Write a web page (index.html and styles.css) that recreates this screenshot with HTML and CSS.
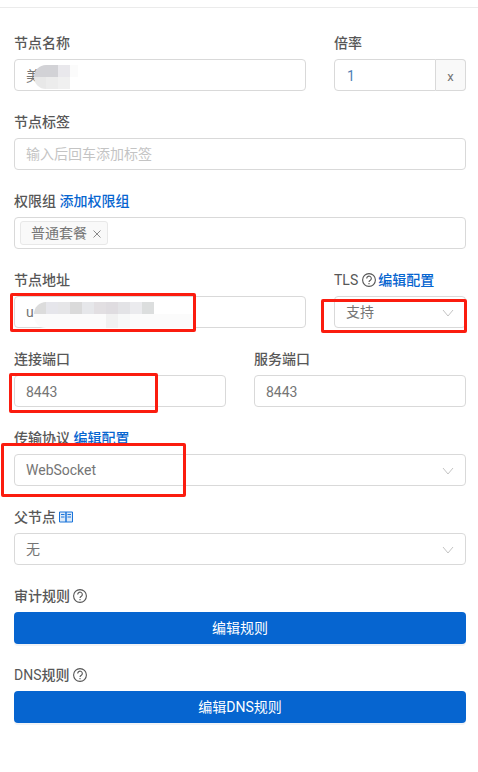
FILE: index.html
```html
<!DOCTYPE html>
<html lang="en">
<head>
    <meta charset="UTF-8">
    <meta name="viewport" content="width=device-width, initial-scale=1.0">
    <title>节点设置</title>
    <link rel="stylesheet" href="styles.css">
</head>
<body>

<div class="top-line"></div>

<form class="node-form">
    <div class="row">
        <div class="field col-wide">
            <label class="field-label">节点名称</label>
            <div class="input-wrap">
                <input class="input" type="text" value="美">
                <div class="mosaic mosaic-name"></div>
            </div>
        </div>
        <div class="field col-narrow">
            <label class="field-label">倍率</label>
            <div class="input-group">
                <input class="input input-rate" type="text" value="1">
                <span class="addon">x</span>
            </div>
        </div>
    </div>

    <div class="field">
        <label class="field-label">节点标签</label>
        <input class="input" type="text" placeholder="输入后回车添加标签">
    </div>

    <div class="field">
        <label class="field-label">权限组 <a class="link" href="#">添加权限组</a></label>
        <div class="tags-input">
            <span class="tag">普通套餐<svg class="tag-close" viewBox="0 0 8 8"><path d="M.5.5l7 7M7.500.5l-7 7"/></svg></span>
        </div>
    </div>

    <div class="row">
        <div class="field col-wide">
            <label class="field-label">节点地址</label>
            <div class="input-wrap">
                <input class="input" type="text" value="u">
                <div class="mosaic mosaic-addr"></div>
            </div>
        </div>
        <div class="field col-narrow">
            <label class="field-label label-thin">TLS <svg class="help" viewBox="0 0 14 14"><circle cx="7" cy="7" r="6.4"/><path d="M4.700 5.400a2.300 2.300 0 1 1 3.600 1.900c-.8.500-1.300.9-1.300 1.800"/><path d="M7 10.100v1.100"/></svg> <a class="link" href="#">编辑配置</a></label>
            <div class="select">支持<svg class="chevron" viewBox="0 0 12 8"><path d="M1 1l5 6 5-6"/></svg></div>
        </div>
    </div>

    <div class="row">
        <div class="field col-half">
            <label class="field-label">连接端口</label>
            <input class="input input-num" type="text" value="8443">
        </div>
        <div class="field col-half">
            <label class="field-label">服务端口</label>
            <input class="input input-num" type="text" value="8443">
        </div>
    </div>

    <div class="field">
        <label class="field-label">传输协议 <a class="link" href="#">编辑配置</a></label>
        <div class="select">WebSocket<svg class="chevron" viewBox="0 0 12 8"><path d="M1 1l5 6 5-6"/></svg></div>
    </div>

    <div class="field">
        <label class="field-label">父节点 <svg class="book" viewBox="0 0 14 12"><path class="book-fill" d="M.5 1h6.500v10H.5zM7 1h6.500v10H7z"/><path d="M2 3.500h3.500M2 6h3.500M8.500 3.500H12M8.500 6H12"/></svg></label>
        <div class="select">无<svg class="chevron" viewBox="0 0 12 8"><path d="M1 1l5 6 5-6"/></svg></div>
    </div>

    <div class="field">
        <label class="field-label">审计规则 <svg class="help" viewBox="0 0 14 14"><circle cx="7" cy="7" r="6.4"/><path d="M4.700 5.400a2.300 2.300 0 1 1 3.600 1.900c-.8.500-1.300.9-1.300 1.800"/><path d="M7 10.100v1.100"/></svg></label>
        <button class="btn" type="button">编辑规则</button>
    </div>

    <div class="field">
        <label class="field-label"><span class="latin">DNS</span>规则 <svg class="help" viewBox="0 0 14 14"><circle cx="7" cy="7" r="6.4"/><path d="M4.700 5.400a2.300 2.300 0 1 1 3.600 1.900c-.8.500-1.300.9-1.300 1.800"/><path d="M7 10.100v1.100"/></svg></label>
        <button class="btn" type="button">编辑DNS规则</button>
    </div>
</form>

<!-- red boxes drawn on top of the screenshot -->
<div class="mark mark-addr"></div>
<div class="mark mark-tls"></div>
<div class="mark mark-port"></div>
<div class="mark mark-proto"></div>

</body>
</html>
```

FILE: styles.css
```css
* {
    box-sizing: border-box;
}
body {
    margin: 0;
    height: 772px;
    overflow: hidden;
    position: relative;
    background-color: #fff;
    font-family: Roboto, "Noto Sans CJK SC", sans-serif;
    font-size: 14px;
    line-height: 21px;
    color: #757575;
}
.top-line {
    height: 8px;
    border-bottom: 1px solid #ebebeb;
}
.node-form {
    padding: 24px 12px 0 14px;
}
.row {
    display: flex;
    gap: 28px;
}
.field {
    margin-bottom: 20px;
}
.col-wide {
    width: 292px;
}
.col-narrow {
    width: 132px;
}
.col-half {
    width: 212px;
}
.field-label {
    display: block;
    height: 21px;
    margin-bottom: 6px;
    line-height: 23px;
    font-weight: 500;
    color: #575757;
    white-space: nowrap;
}
.label-thin, .latin {
    font-weight: 400;
}
.label-thin .help {
    margin-right: -1px;
}
.link {
    color: #0665d0;
    text-decoration: none;
    font-weight: 500;
}
.input-wrap {
    position: relative;
}
.input {
    display: block;
    width: 100%;
    height: 32px;
    padding: 0 11px;
    font: inherit;
    color: #757575;
    background-color: #fff;
    border: 1px solid #d9d9d9;
    border-radius: 4px;
    outline: none;
}
.input::placeholder {
    color: #c4c4c4;
}
.input-num {
    padding-top: 2px;
}
.input-group {
    display: flex;
}
.input-rate {
    flex: 1;
    min-width: 0;
    padding: 2px 0 0 12px;
    color: #4f7fb5;
    border-radius: 4px 0 0 4px;
}
.addon {
    width: 30px;
    height: 32px;
    line-height: 34px;
    text-align: center;
    font-size: 13px;
    background-color: #f9f9f9;
    border: 1px solid #d9d9d9;
    border-left: 0;
    border-radius: 0 4px 4px 0;
}
.tags-input {
    display: flex;
    align-items: center;
    height: 32px;
    padding: 0 5px;
    border: 1px solid #d9d9d9;
    border-radius: 4px;
}
.tag {
    display: flex;
    align-items: center;
    gap: 6px;
    height: 24px;
    padding: 0 6px 0 10px;
    background-color: #f9f9f9;
    border: 1px solid #e8e8e8;
    border-radius: 3px;
}
.tag-close {
    width: 8px;
    height: 8px;
    margin-top: 2px;
    fill: none;
    stroke: #8a8a8a;
    stroke-width: 1;
}
.select {
    display: flex;
    align-items: center;
    justify-content: space-between;
    height: 32px;
    padding: 0 11px;
    background-color: #fff;
    border: 1px solid #d9d9d9;
    border-radius: 4px;
}
.chevron {
    width: 12px;
    height: 8px;
    margin-top: 2px;
    fill: none;
    stroke: #c4c4c4;
    stroke-width: 1;
}
.help {
    width: 14px;
    height: 14px;
    vertical-align: -2px;
    fill: none;
    stroke: #555;
    stroke-width: 1.1;
}
.book {
    width: 14px;
    height: 12px;
    vertical-align: -1px;
    fill: none;
    stroke: #1a74da;
    stroke-width: 1;
}
.book-fill {
    fill: #dbe9f8;
}
.btn {
    display: block;
    width: 100%;
    height: 32px;
    padding: 1px 0 0;
    font: inherit;
    color: #fff;
    background-color: #0665d0;
    border: 0;
    border-radius: 4px;
    box-shadow: 0 2px 0 #f1f3f6;
}

/* blurred bits of the screenshot */
.mosaic {
    position: absolute;
    top: 6px;
    border-radius: 12px 0 0 12px;
}
.mosaic-name {
    left: 20px;
    width: 44px;
    height: 24px;
    background:
        linear-gradient(90deg, #d2d2d6 0 24px, #e9e8ec 24px 36px, #fbfbfb 36px) top / 100% 12px no-repeat,
        linear-gradient(90deg, #e8e8e8 0 12px, #ececec 12px 24px, #f0f0f0 24px 36px, #fff 36px) bottom / 100% 12px no-repeat;
}
.mosaic-addr {
    left: 20px;
    width: 162px;
    height: 26px;
    background:
        linear-gradient(90deg, #dcdcdc 0 12px, #e6e6eb 12px 24px, #e6e6e8 24px 36px, #dadada 36px 48px, #e6e7ea 48px 60px, #e2dfe2 60px 72px, #dfdce0 72px 84px, #e3e3e6 84px 96px, #ebebee 96px 108px, #dcdede 108px 120px, #fff 120px) top / 100% 12px no-repeat,
        linear-gradient(90deg, #fbfbfb 0 72px, #f1f1f1 72px 84px, #f7f8f8 84px 96px, #fbfbfb 96px) bottom / 100% 14px no-repeat;
}

.mark {
    position: absolute;
    border: 3px solid #fb1c0f;
    border-radius: 2px;
}
.mark-addr {
    left: 10px;
    top: 293px;
    width: 186px;
    height: 39px;
}
.mark-tls {
    left: 321px;
    top: 299px;
    width: 146px;
    height: 34px;
}
.mark-port {
    left: 9px;
    top: 373px;
    width: 149px;
    height: 40px;
}
.mark-proto {
    left: 1px;
    top: 443px;
    width: 185px;
    height: 54px;
}
```
